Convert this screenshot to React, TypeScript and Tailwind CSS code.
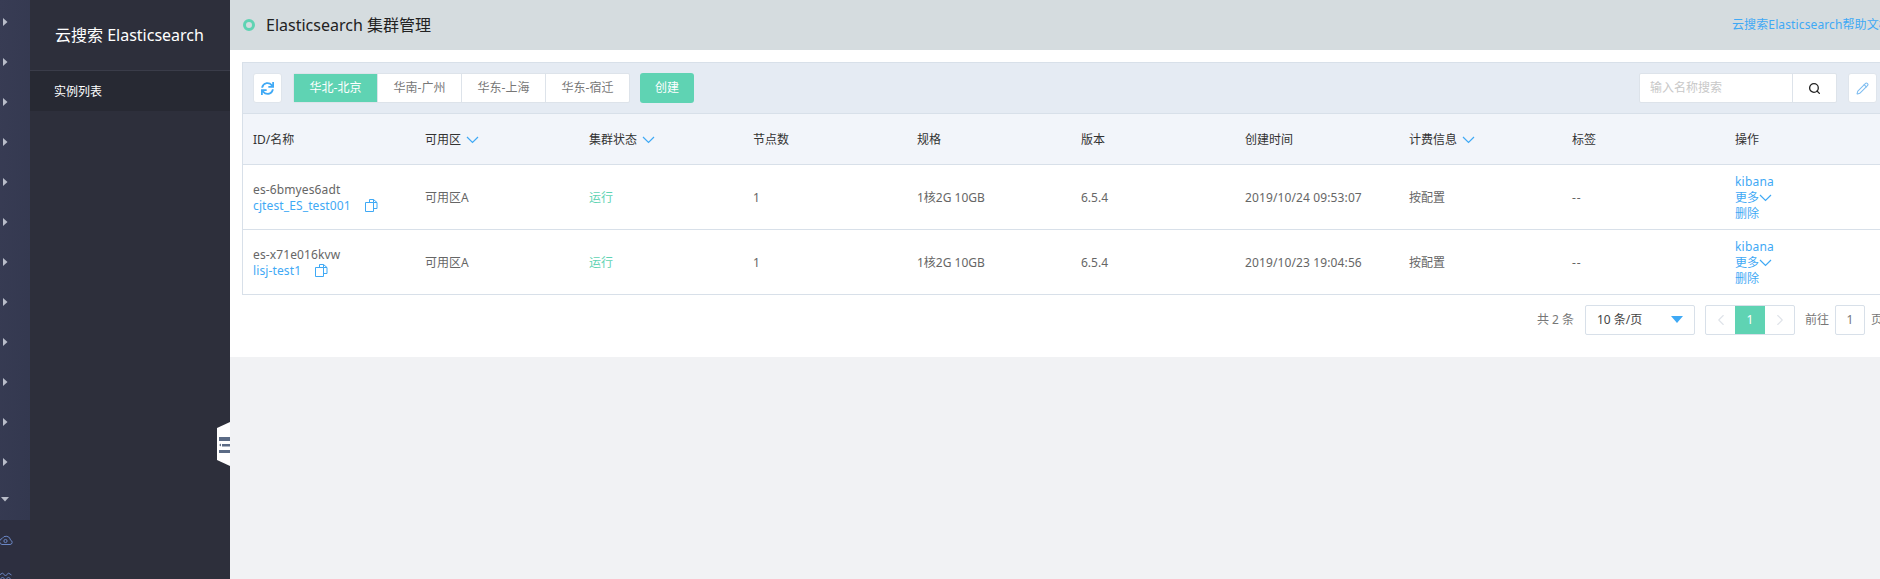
// App.tsx — consola de nube: listado de clusters Elasticsearch
import { FaSync } from 'react-icons/fa';
import { Pencil, Search, ChevronLeft, ChevronRight } from 'lucide-react';

const FONT = "font-['Noto_Sans','Noto_Sans_CJK_SC',sans-serif]";

const regions = ['华南-广州', '华东-上海', '华东-宿迁'];

const rows = [
    { id: 'es-6bmyes6adt', name: 'cjtest_ES_test001', created: '2019/10/24 09:53:07' },
    { id: 'es-x71e016kvw', name: 'lisj-test1', created: '2019/10/23 19:04:56' },
];

const columns = [
    { label: 'ID/名称', width: 'w-[172px]' },
    { label: '可用区', width: 'w-[164px]', filter: true },
    { label: '集群状态', width: 'w-[164px]', filter: true },
    { label: '节点数', width: 'w-[164px]' },
    { label: '规格', width: 'w-[164px]' },
    { label: '版本', width: 'w-[164px]' },
    { label: '创建时间', width: 'w-[164px]' },
    { label: '计费信息', width: 'w-[163px]', filter: true },
    { label: '标签', width: 'w-[163px]' },
    { label: '操作', width: 'w-[164px]' },
];

const Chevron = ({ className = '' }: { className?: string }) => (
    <svg width="13" height="8" viewBox="0 0 13 8" fill="none" stroke="#3fa9f5" strokeWidth="1.2" className={className} aria-hidden="true">
        <path d="M1 1l5.5 5.5L12 1" />
    </svg>
);

const CopyIcon = () => (
    <svg width="13" height="13" viewBox="0 0 13 13" fill="none" stroke="#3fa9f5" strokeWidth="1" aria-hidden="true">
        <path d="M4.5 3V.5h4l3.5 3V9.5H8.5" />
        <path d="M.5 3.5h8v9h-8z" />
        <path d="M8.5 .5v3H12" />
    </svg>
);

const RailArrow = () => (
    <svg width="5" height="8" viewBox="0 0 5 8" fill="#b9bdc9" aria-hidden="true">
        <path d="M0 0l4.5 4L0 8z" />
    </svg>
);

function Rail() {
    return (
        <div className="w-[30px] shrink-0 flex flex-col bg-[#2d2f40] overflow-hidden">
            <div className="h-[520px] shrink-0 pt-[2px] bg-gradient-to-br from-[#383c54] to-[#33384f]">
                {Array.from({ length: 12 }).map((_, i) => (
                    <div key={i} className="h-10 flex items-center pl-[3px]">
                        <RailArrow />
                    </div>
                ))}
                <div className="h-[34px] flex items-center pl-[1px]">
                    <svg width="8" height="5" viewBox="0 0 8 5" fill="#b9bdc9" aria-hidden="true">
                        <path d="M0 0h8L4 4.5z" />
                    </svg>
                </div>
            </div>
            <div className="h-[52px] shrink-0 pt-[14px] -ml-[1px]">
                <svg width="14" height="12" viewBox="0 0 14 12" fill="none" stroke="#6a86c4" strokeWidth="1" aria-hidden="true">
                    <path d="M3 10.5H11a2.2 2.2 0 0 0 .6-4.3A4.6 4.6 0 0 0 3 4.6a3 3 0 0 0 0 5.9z" />
                    <circle cx="6.5" cy="7" r="1.6" />
                </svg>
            </div>
            <div className="flex items-center -ml-[1px]">
                <svg width="14" height="10" viewBox="0 0 14 10" fill="none" stroke="#6a86c4" strokeWidth="1" aria-hidden="true">
                    <path d="M.5 3l3-2 3 3 3-3 3 2M.5 8l3-3 3 3 3-3 3 3" />
                </svg>
            </div>
        </div>
    );
}

function Sidebar() {
    return (
        <aside className="relative w-[200px] shrink-0 bg-[#2d2f3b]">
            <div className="h-[71px] pl-[25px] pt-[23px] border-b border-[#3a3c49] text-base leading-[24px] text-white">云搜索 Elasticsearch</div>
            <div className="h-10 pl-6 pt-[1px] flex items-center bg-[#272933] text-xs text-white">实例列表</div>
            {/* pestaña para colapsar el menú */}
            <svg width="13" height="44" viewBox="0 0 13 44" className="absolute right-0 top-[422px]" aria-hidden="true">
                <path d="M13 0L0 6v32l13 6z" fill="#fff" />
                <path d="M2 15h11v4H2zM2 28h11v3H2zM5 22h8v2.5H5zM2 23l2-1.5v3z" fill="#5b6b85" />
            </svg>
        </aside>
    );
}

function Toolbar() {
    return (
        <div className="h-[51px] flex items-center bg-[#e5ebf3] border-b border-[#d8e0e9] pl-[10px] pr-[23px]">
            <button className="w-[29px] h-[30px] flex items-center justify-center bg-white border border-[#dfe5ec] rounded-[3px]">
                <FaSync size={13} color="#3fa9f5" />
            </button>
            <div className="ml-[11px] flex h-[30px] bg-white border border-[#dde3ea] rounded-[2px]">
                <div className="w-[83px] flex items-center justify-center bg-[#5fd3b3] text-xs text-white">华北-北京</div>
                {regions.map((r) => (
                    <div key={r} className="w-[84px] flex items-center justify-center border-l border-[#dde3ea] text-xs text-[#777]">
                        {r}
                    </div>
                ))}
            </div>
            <button className="ml-[10px] w-[54px] h-[30px] bg-[#5fd3b3] rounded-[3px] text-xs text-white">创建</button>
            <div className="ml-auto flex h-[30px] bg-white border border-[#dde3ea] rounded-[2px]">
                <div className="w-[152px] pl-[10px] flex items-center text-xs text-[#c8c8c8]">输入名称搜索</div>
                <div className="w-[44px] flex items-center justify-center border-l border-[#dde3ea]">
                    <Search size={13} strokeWidth={2.4} color="#222" />
                </div>
            </div>
            <button className="ml-[11px] w-[29px] h-[30px] flex items-center justify-center bg-white border border-[#dfe5ec] rounded-[3px]">
                <Pencil size={13} color="#7fbdf0" />
            </button>
        </div>
    );
}

function ClusterTable() {
    return (
        <table className="w-[1646px] table-fixed border-collapse text-xs">
            <colgroup>
                {columns.map((c) => (
                    <col key={c.label} className={c.width} />
                ))}
            </colgroup>
            <thead>
                <tr className="h-[50px] bg-[#f2f5fa] border-b border-[#d8e0e9]">
                    {columns.map((c) => (
                        <th key={c.label} className="pl-[10px] pt-[3px] text-left font-normal text-[#333]">
                            <span className="inline-flex items-center gap-[5px]">
                                {c.label}
                                {c.filter && <Chevron />}
                            </span>
                        </th>
                    ))}
                </tr>
            </thead>
            <tbody className="text-[#666]">
                {rows.map((r) => (
                    <tr key={r.id} className="h-[65px] border-b border-[#d8e0e9]">
                        <td className="pl-[10px] pt-[2px] leading-4 tracking-[0.12px]">
                            <div>{r.id}</div>
                            <div className="flex items-center gap-[14px] text-[#3fa9f5]">
                                {r.name}
                                <CopyIcon />
                            </div>
                        </td>
                        <td className="pl-[10px] pt-[2px]">可用区A</td>
                        <td className="pl-[10px] pt-[2px] text-[#5fd3b3]">运行</td>
                        <td className="pl-[10px] pt-[2px]">1</td>
                        <td className="pl-[10px] pt-[2px]">1核2G 10GB</td>
                        <td className="pl-[10px] pt-[2px]">6.5.4</td>
                        <td className="pl-[10px] pt-[2px] tracking-[0.12px]">{r.created}</td>
                        <td className="pl-[10px] pt-[2px]">按配置</td>
                        <td className="pl-[10px] pt-[2px] tracking-[1px]">--</td>
                        <td className="pl-[10px] pt-[2px] leading-4 text-[#3fa9f5]">
                            <div className="tracking-[0.2px]">kibana</div>
                            <div className="flex items-center">更多<Chevron /></div>
                            <div>删除</div>
                        </td>
                    </tr>
                ))}
            </tbody>
        </table>
    );
}

function Pagination() {
    return (
        <div className="h-[62px] pt-[10px] flex items-start text-xs text-[#777]">
            <span className="ml-[1295px] w-[38px] leading-[30px] whitespace-nowrap">共 2 条</span>
            <div className="ml-[10px] w-[110px] h-[30px] pl-[11px] pr-[11px] flex items-center justify-between bg-white border border-[#d8e0e9] rounded-[2px] text-[#444]">
                10 条/页
                <svg width="12" height="7" viewBox="0 0 12 7" fill="#3fa9f5" aria-hidden="true">
                    <path d="M0 0h12L6 7z" />
                </svg>
            </div>
            <div className="ml-[10px] flex h-[30px] border border-[#d8e0e9] rounded-[2px]">
                <div className="w-[29px] flex items-center justify-center">
                    <ChevronLeft size={18} strokeWidth={1.5} color="#dfe3e9" />
                </div>
                <div className="w-[30px] flex items-center justify-center bg-[#5fd3b3] text-white">1</div>
                <div className="w-[29px] flex items-center justify-center">
                    <ChevronRight size={18} strokeWidth={1.5} color="#dfe3e9" />
                </div>
            </div>
            <span className="ml-[10px] leading-[30px]">前往</span>
            <div className="ml-[6px] w-[30px] h-[30px] flex items-center justify-center border border-[#d8e0e9] rounded-[2px]">1</div>
            <span className="ml-[6px] leading-[30px]">页</span>
        </div>
    );
}

export default function App() {
    return (
        <div className={`h-[579px] w-[1880px] flex overflow-hidden bg-[#f1f2f4] ${FONT}`}>
            <Rail />
            <Sidebar />
            <main className="flex-1 min-w-0 overflow-hidden">
                <div className="w-[1670px]">
                    <header className="h-[50px] flex items-center justify-between bg-[#d5dcdf] pl-[13px]">
                        <div className="flex items-center">
                            <span className="w-3 h-3 rounded-full border-[3px] border-[#5fd3b3]" />
                            <span className="ml-[11px] text-base text-[#222]">Elasticsearch 集群管理</span>
                        </div>
                        <a className="text-xs text-[#3fa9f5] w-[168px] whitespace-nowrap tracking-[0.12px]">云搜索Elasticsearch帮助文档</a>
                    </header>
                    <div className="bg-white pt-3 pl-3">
                        <div className="border-l border-t border-[#d8e0e9]">
                            <Toolbar />
                            <ClusterTable />
                        </div>
                        <Pagination />
                    </div>
                </div>
            </main>
        </div>
    );
}
